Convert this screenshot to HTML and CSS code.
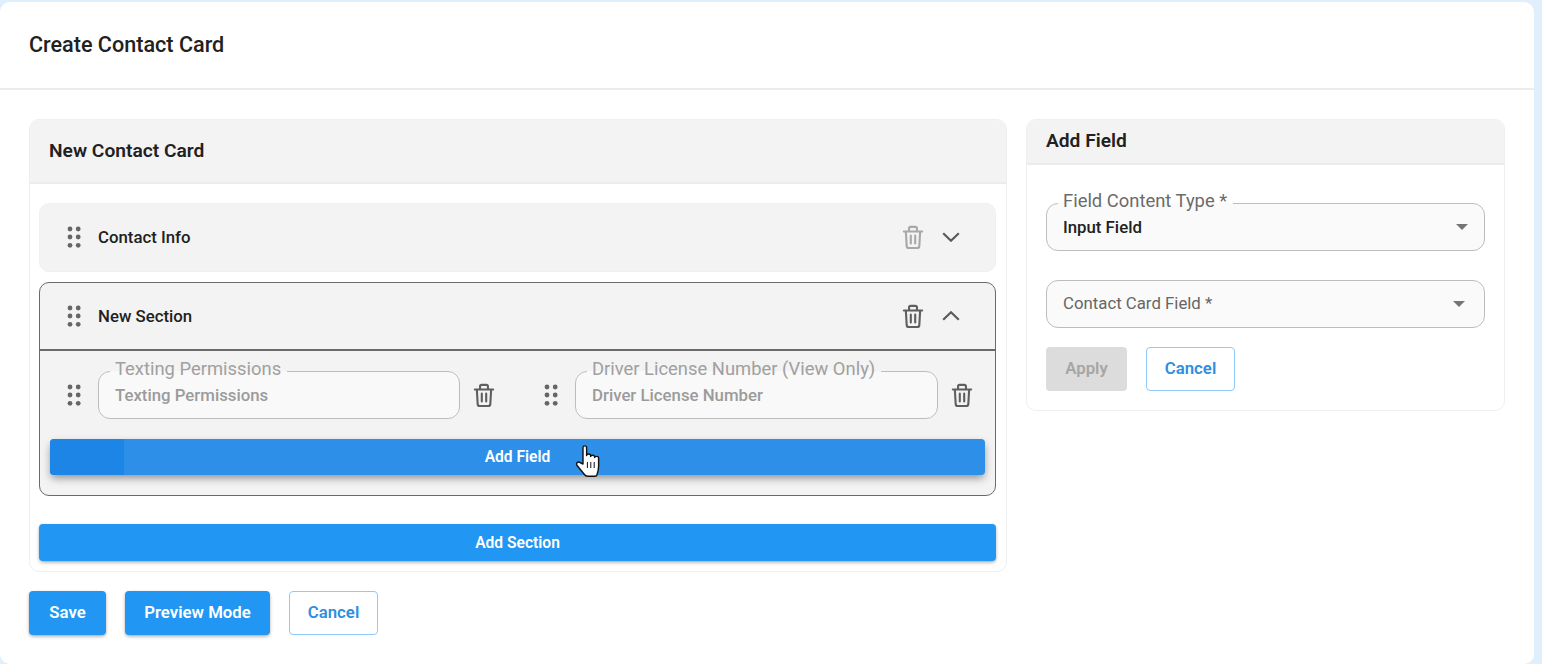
FILE: index.html
```html
<!DOCTYPE html>
<html lang="en">
<head>
<meta charset="utf-8">
<title>Create Contact Card</title>
<link rel="stylesheet" href="styles.css">
</head>
<body>
<svg class="defs" width="0" height="0" aria-hidden="true">
  <defs>
    <symbol id="drag" viewBox="0 0 14 24">
      <circle cx="3" cy="4" r="2.4"/><circle cx="11.2" cy="4" r="2.4"/>
      <circle cx="3" cy="12" r="2.4"/><circle cx="11.2" cy="12" r="2.4"/>
      <circle cx="3" cy="20.3" r="2.4"/><circle cx="11.2" cy="20.3" r="2.4"/>
    </symbol>
    <symbol id="trash" viewBox="0 0 24 26">
      <path fill="none" stroke="currentColor" stroke-width="2.3" stroke-linecap="round" stroke-linejoin="round" d="M2 6.5h20M7.7 6.5V3a1.6 1.6 0 0 1 1.6-1.600h5.400A1.600 1.600 0 0 1 16.300 3v3.500M4.200 6.500l.9 15.600a2.500 2.500 0 0 0 2.500 2.400h8.800a2.500 2.500 0 0 0 2.500-2.400l.9-15.600M9.600 11v8.500M14.400 11v8.500"/>
    </symbol>
  </defs>
</svg>
<main class="panel">
  <header class="panel-head"><h1>Create Contact Card</h1></header>
  <div class="panel-body">
    <div class="columns">
      <section class="card card-main">
        <h2 class="card-title title-tall">New Contact Card</h2>
        <div class="card-content">
          <div class="sec">
            <div class="sec-head">
              <span class="handle"><svg class="i-drag"><use href="#drag"/></svg></span>
              <span class="sec-name">Contact Info</span>
              <span class="icon-btn faded"><svg class="i-trash"><use href="#trash"/></svg></span>
              <span class="icon-btn"><svg class="i-chev" viewBox="0 0 18 10"><path d="M1.200 1.200 9 8.700l7.800-7.500"/></svg></span>
            </div>
          </div>
          <div class="sec sec-open">
            <div class="sec-head">
              <span class="handle"><svg class="i-drag"><use href="#drag"/></svg></span>
              <span class="sec-name">New Section</span>
              <span class="icon-btn"><svg class="i-trash"><use href="#trash"/></svg></span>
              <span class="icon-btn"><svg class="i-chev" viewBox="0 0 18 10"><path d="M1.200 8.800 9 1.300l7.800 7.500"/></svg></span>
            </div>
            <div class="sec-body">
              <div class="field-grid">
                <div class="field-item">
                  <span class="handle"><svg class="i-drag"><use href="#drag"/></svg></span>
                  <fieldset class="outlined disabled"><legend>Texting Permissions</legend><span class="value">Texting Permissions</span></fieldset>
                  <span class="handle"><svg class="i-trash"><use href="#trash"/></svg></span>
                </div>
                <div class="field-item">
                  <span class="handle"><svg class="i-drag"><use href="#drag"/></svg></span>
                  <fieldset class="outlined disabled"><legend>Driver License Number (View Only)</legend><span class="value">Driver License Number</span></fieldset>
                  <span class="handle handle-narrow"><svg class="i-trash"><use href="#trash"/></svg></span>
                </div>
              </div>
              <button class="btn btn-add-field" type="button">Add Field
                <svg class="cursor" viewBox="0 0 24 32"><path d="M7 19V2.200C7 .4 10.600 .4 10.600 2.200V10.500C10.600 8.500 14.600 8.500 14.600 10.500V11.500C14.600 9.800 18.600 9.800 18.600 11.500V12.500C18.600 11 22.600 11 22.600 12.800V21C22.600 25 22 27 21 29.800 20.700 30.800 20 31.300 19 31.300H12C10 31.300 9 30.500 8 29L.9 20.200C-.2 18 2 16 4 17.500Z"/><path class="cursor-line" d="M11.400 17v6M14.800 17v6M18.200 17v6"/></svg>
              </button>
            </div>
          </div>
          <button class="btn btn-add-section" type="button">Add Section</button>
        </div>
      </section>
      <aside class="card card-side">
        <h2 class="card-title title-short">Add Field</h2>
        <div class="side-content">
          <fieldset class="outlined select"><legend>Field Content Type *</legend><span class="value value-strong">Input Field</span><i class="caret"></i></fieldset>
          <div class="outlined select select-plain"><span class="placeholder">Contact Card Field *</span><i class="caret caret-shift"></i></div>
          <div class="actions">
            <button class="btn btn-apply" type="button">Apply</button>
            <button class="btn btn-outline btn-cancel-side" type="button">Cancel</button>
          </div>
        </div>
      </aside>
    </div>
    <div class="footer-actions">
      <button class="btn btn-save" type="button">Save</button>
      <button class="btn btn-preview" type="button">Preview Mode</button>
      <button class="btn btn-outline btn-cancel" type="button">Cancel</button>
    </div>
  </div>
</main>
</body>
</html>
```

FILE: styles.css
```css
* { box-sizing: border-box; }
html, body { height: 100%; }
body {
  margin: 0;
  height: 664px;
  overflow: hidden;
  background: #e0effc;
  font-family: Roboto, "Liberation Sans", sans-serif;
  color: #212121;
}
.defs { position: absolute; }
.panel {
  width: 1534px;
  height: 662px;
  margin-top: 2px;
  background: #fff;
  border-radius: 10px;
}
.panel-head {
  height: 88px;
  border-bottom: 2px solid #ececec;
  display: flex;
  align-items: center;
  padding: 0 29px;
}
h1 { margin: 0; font-size: 21.6px; font-weight: 500; line-height: 28px; color: #212121; }
.panel-body { padding: 29px 29px 0; }
.columns { display: flex; align-items: flex-start; gap: 19px; }
.card {
  border: 1px solid #efefef;
  border-radius: 10px;
  background: #fff;
  overflow: hidden;
}
.card-main { width: 978px; height: 453px; }
.card-side { width: 479px; height: 292px; }
.card-title {
  margin: 0;
  background: #f3f3f3;
  border-bottom: 2px solid #ececec;
  font-size: 19.2px;
  font-weight: 600;
  color: #212121;
  display: flex;
  align-items: center;
  padding: 0 19px;
}
.title-tall { height: 64px; padding-bottom: 2px; }
.title-short { height: 45px; padding-bottom: 2px; }
.card-content { padding: 19px 10px 0 9px; }
.sec {
  background: #f3f3f3;
  border: 1px solid #f0f0f0;
  border-radius: 10px;
  margin-bottom: 10px;
}
.sec-head {
  height: 67px;
  display: flex;
  align-items: center;
  padding: 0 25px 1px 10px;
}
.sec-open { border-color: #6a6a6a; height: 214px; margin-bottom: 28px; }
.sec-open .sec-head { height: 68px; border-bottom: 2px solid #6a6a6a; padding-bottom: 0; }
.handle {
  width: 48px;
  height: 48px;
  flex: none;
  display: flex;
  align-items: center;
  justify-content: center;
  color: #5f5f5f;
}
.handle-narrow { width: 47px; }
.sec-name { flex: 1; font-size: 16.8px; font-weight: 500; color: #212121; }
.icon-btn {
  width: 38px;
  height: 38px;
  display: flex;
  align-items: center;
  justify-content: center;
  color: #5f5f5f;
}
.faded { opacity: .5; }
.i-drag { width: 14px; height: 24px; fill: #666; }
.i-trash { width: 22px; height: 25px; }
.i-chev { width: 18px; height: 10px; fill: none; stroke: #5a5a5a; stroke-width: 2.2; }
.sec-body { padding: 10px 10px 0; }
.field-grid { display: grid; grid-template-columns: 458px 458px; gap: 19px; }
.field-item { display: flex; align-items: flex-end; }
.outlined {
  margin: 0;
  min-width: 0;
  border: 1px solid #bdbdbd;
  border-radius: 12px;
  background: #fafafa;
  padding: 0 16px;
  position: relative;
}
fieldset.outlined { height: 58px; }
.field-item .outlined { flex: 1; }
.disabled { background: #f9f9f9; }
legend {
  padding: 0 6px 4px 5px;
  margin-left: -5px;
  font-size: 18.4px;
  line-height: 16px;
  white-space: nowrap;
  color: #6b6b6b;
}
.disabled legend { color: #a0a0a0; }
.value { display: block; font-size: 16.8px; font-weight: 500; line-height: 24px; margin-top: 2px; color: #9b9b9b; }
.value-strong { color: #212121; }
.placeholder { font-size: 16.8px; color: #666; line-height: 44px; }
.btn {
  border: 0;
  border-radius: 4px;
  font-family: inherit;
  font-size: 16.8px;
  font-weight: 600;
  color: #fff;
  background: #2196f3;
  cursor: pointer;
  padding: 0 0 2px;
  box-shadow: 0 2px 4px -1px rgba(0,0,0,.3), 0 1px 3px rgba(0,0,0,.14);
}
.btn-add-field {
  position: relative;
  display: block;
  width: 935px;
  height: 36px;
  margin-top: 20px;
  padding: 0;
  font-size: 15.6px;
  background:
    radial-gradient(circle at 1px 1px, rgba(225,90,170,.06) .8px, transparent 1px) 0 0 / 4px 4px,
    #2b90ea;
  box-shadow: 0 4px 8px -1px rgba(0,0,0,.42);
}
.btn-add-field::before {
  content: "";
  position: absolute;
  left: 0;
  top: 0;
  bottom: 0;
  width: 74px;
  background: #1c85e6;
  border-radius: 4px 0 0 4px;
}
.cursor { position: absolute; left: 526px; top: 6px; width: 24px; height: 32px; fill: #fff; stroke: #111; stroke-width: 1.4; stroke-linejoin: round; }
.cursor-line { fill: none; stroke-width: 1; }
.btn-add-section { display: block; width: 957px; height: 37px; font-size: 15.6px; padding: 0; }
.footer-actions { display: flex; gap: 19px; margin-top: 19px; }
.footer-actions .btn { height: 44px; }
.btn-save { width: 77px; }
.btn-preview { width: 145px; }
.btn-cancel { width: 89px; }
.btn-outline {
  background: #fff;
  border: 1px solid #90caf9;
  color: #2e8ee0;
  box-shadow: none;
}
.side-content { padding: 28px 19px 0; }
.select { width: 439px; }
.select-plain { height: 48px; margin-top: 29px; }
.caret {
  position: absolute;
  right: 16px;
  bottom: 20px;
  width: 0;
  height: 0;
  border-left: 6px solid transparent;
  border-right: 6px solid transparent;
  border-top: 6px solid #757575;
}
.caret-shift { right: 19px; }
.actions { display: flex; gap: 19px; margin-top: 19px; }
.actions .btn { height: 44px; }
.btn-apply { width: 81px; background: #dcdcdc; color: #a6a6a6; box-shadow: none; }
.btn-cancel-side { width: 89px; }
```
